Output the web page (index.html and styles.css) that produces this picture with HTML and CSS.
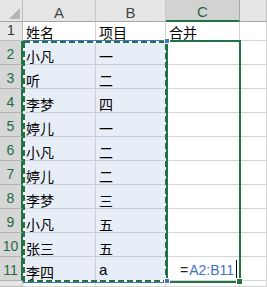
FILE: index.html
```html
<!DOCTYPE html>
<html lang="zh">
<head>
<meta charset="utf-8">
<link rel="stylesheet" href="styles.css">
</head>
<body>
<div class="sheet">
  <div class="corner"><svg width="23" height="22" viewBox="0 0 23 22"><polygon points="20,8 20,19 9,19" fill="#b5b5b5"/></svg></div>
  <div class="ch">A</div><div class="ch">B</div><div class="ch ch-sel">C</div><div class="ch"></div>

  <div class="rh">1</div><div class="c">姓名</div><div class="c">项目</div><div class="c">合并</div><div class="c"></div>

  <div class="rh rh-sel">2</div><div class="c src">小凡</div><div class="c src">一</div><div class="c"></div><div class="c"></div>
  <div class="rh rh-sel">3</div><div class="c src">听</div><div class="c src">二</div><div class="c"></div><div class="c"></div>
  <div class="rh rh-sel">4</div><div class="c src">李梦</div><div class="c src">四</div><div class="c"></div><div class="c"></div>
  <div class="rh rh-sel">5</div><div class="c src">婷儿</div><div class="c src">一</div><div class="c"></div><div class="c"></div>
  <div class="rh rh-sel">6</div><div class="c src">小凡</div><div class="c src">二</div><div class="c"></div><div class="c"></div>
  <div class="rh rh-sel">7</div><div class="c src">婷儿</div><div class="c src">二</div><div class="c"></div><div class="c"></div>
  <div class="rh rh-sel">8</div><div class="c src">李梦</div><div class="c src">三</div><div class="c"></div><div class="c"></div>
  <div class="rh rh-sel">9</div><div class="c src">小凡</div><div class="c src">五</div><div class="c"></div><div class="c"></div>
  <div class="rh rh-sel">10</div><div class="c src">张三</div><div class="c src">五</div><div class="c"></div><div class="c"></div>
  <div class="rh rh-sel">11</div><div class="c src">李四</div><div class="c src latin">a</div><div class="c formula"><span class="eq">=</span><span class="ref">A2:B11</span><span class="caret"></span></div><div class="c"></div>

  <div class="rh"></div><div class="c"></div><div class="c"></div><div class="c"></div><div class="c"></div>

  <svg class="overlay" width="267" height="287" viewBox="0 0 267 287">
    <rect x="23.5" y="40.5" width="143.5" height="242" fill="none" stroke="#4472c4" stroke-width="1"/>
    <rect x="24" y="42" width="142" height="239" fill="none" stroke="#ffffff" stroke-width="2"/>
    <rect x="24" y="42" width="142" height="239" fill="none" stroke="#217346" stroke-width="2" stroke-dasharray="6 3"/>
    <rect x="167" y="41" width="73" height="241" fill="none" stroke="#217346" stroke-width="2"/>
    <rect x="164.5" y="38.5" width="5" height="5" fill="#4472c4" stroke="#ffffff" stroke-width="1"/>
    <rect x="164.5" y="278.5" width="5" height="5" fill="#4472c4" stroke="#ffffff" stroke-width="1"/>
    <rect x="236.5" y="278.5" width="6" height="6" fill="#217346" stroke="#ffffff" stroke-width="1"/>
  </svg>
</div>
</body>
</html>
```

FILE: styles.css
```css
html, body {
  margin: 0;
  padding: 0;
  background: #ffffff;
}

.sheet {
  position: relative;
  width: 267px;
  height: 287px;
  overflow: hidden;
  display: grid;
  grid-template-columns: 23px 73px 70px 74px 27px;
  grid-template-rows: 22px 19px repeat(10, 24px) 6px;
  font-family: "Noto Sans CJK SC", "Liberation Sans", sans-serif;
  color: #000;
}

.corner {
  background: #e6e6e6;
  border-right: 1px solid #bdbdbd;
  border-bottom: 1px solid #a6a6a6;
  box-sizing: border-box;
}

.corner svg {
  display: block;
}

.ch {
  box-sizing: border-box;
  background: #e6e6e6;
  border-right: 1px solid #c6c6c6;
  border-bottom: 1px solid #a6a6a6;
  font-family: "Liberation Sans", sans-serif;
  font-size: 15px;
  color: #444;
  display: flex;
  align-items: center;
  justify-content: center;
  padding-top: 3px;
}

.ch-sel {
  background: #d2d2d2;
  color: #1e6b47;
  border-bottom: 2px solid #217346;
  border-right-color: #a6a6a6;
}

.rh {
  box-sizing: border-box;
  background: #e6e6e6;
  border-right: 1px solid #bdbdbd;
  border-bottom: 1px solid #bdbdbd;
  font-family: "Liberation Sans", sans-serif;
  font-size: 14px;
  color: #333;
  display: flex;
  align-items: flex-end;
  justify-content: center;
  line-height: 14px;
  padding-bottom: 3px;
}

.rh-sel {
  background: #d6d6d6;
  color: #1e6b47;
  border-right: 2px solid #217346;
  border-bottom-color: #b3b3b3;
}

.c {
  box-sizing: border-box;
  border-right: 1px solid #d4d4d4;
  border-bottom: 1px solid #d4d4d4;
  font-size: 14px;
  line-height: 14px;
  display: flex;
  align-items: flex-end;
  padding: 0 0 1px 3px;
  white-space: nowrap;
}

.src {
  background: #e8eef8;
  border-right-color: #c9ced6;
  border-bottom-color: #c9ced6;
}

.latin {
  font-family: "Liberation Sans", sans-serif;
  font-size: 15px;
  padding-bottom: 3px;
}

.formula {
  font-family: "Liberation Sans", sans-serif;
  font-size: 14px;
  padding-left: 14px;
  padding-bottom: 2px;
  line-height: 16px;
}

.eq {
  color: #222;
  margin-right: 1px;
}

.ref {
  color: #4472c4;
}

.caret {
  display: inline-block;
  width: 1px;
  height: 18px;
  margin-left: 2px;
  background: #000;
}

.overlay {
  position: absolute;
  left: 0;
  top: 0;
  pointer-events: none;
}
```
